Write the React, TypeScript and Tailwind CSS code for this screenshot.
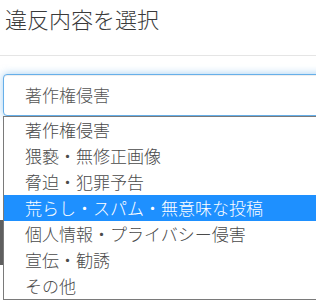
const options = [
  "著作権侵害",
  "猥褻・無修正画像",
  "脅迫・犯罪予告",
  "荒らし・スパム・無意味な投稿",
  "個人情報・プライバシー侵害",
  "宣伝・勧誘",
  "その他",
]

export default function App() {
  const selected = 3

  return (
    <div
      className="w-[316px] h-[300px] overflow-hidden bg-white font-light"
      style={{ fontFamily: '"Noto Sans CJK JP", "Noto Sans", sans-serif' }}
    >
      {/* Header */}
      <div className="h-[56px] border-b border-[#e5e5e5] pl-[5px] pt-[3px]">
        <h1 className="text-[22px] leading-[30px] text-[#3a3a3a]">違反内容を選択</h1>
      </div>

      {/* Select box */}
      <div className="pt-[18px] pl-[3px]">
        <div className="w-[340px] h-[42px] rounded-[4px] border border-[#66afe9] bg-white pl-[21px] flex items-center text-[17px] text-[#555] shadow-[0_0_8px_rgba(102,175,233,0.6),inset_0_1px_1px_rgba(0,0,0,0.075)]">
          著作権侵害
        </div>
      </div>

      {/* Open list */}
      <div className="flex">
        <div className="w-[3px] shrink-0">
          <div className="mt-[104px] h-[45px] bg-[#5f5f5f]" />
        </div>
        <ul className="w-[340px] shrink-0 border border-[#7a7a7a] bg-white">
          {options.map((opt, i) => (
            <li
              key={opt}
              className={
                i === selected
                  ? "h-[26px] pl-[21px] text-[17px] leading-[26px] bg-[#1e90ff] text-white"
                  : "h-[26px] pl-[21px] text-[17px] leading-[26px] text-[#4a4a4a]"
              }
            >
              {opt}
            </li>
          ))}
        </ul>
      </div>
    </div>
  )
}
